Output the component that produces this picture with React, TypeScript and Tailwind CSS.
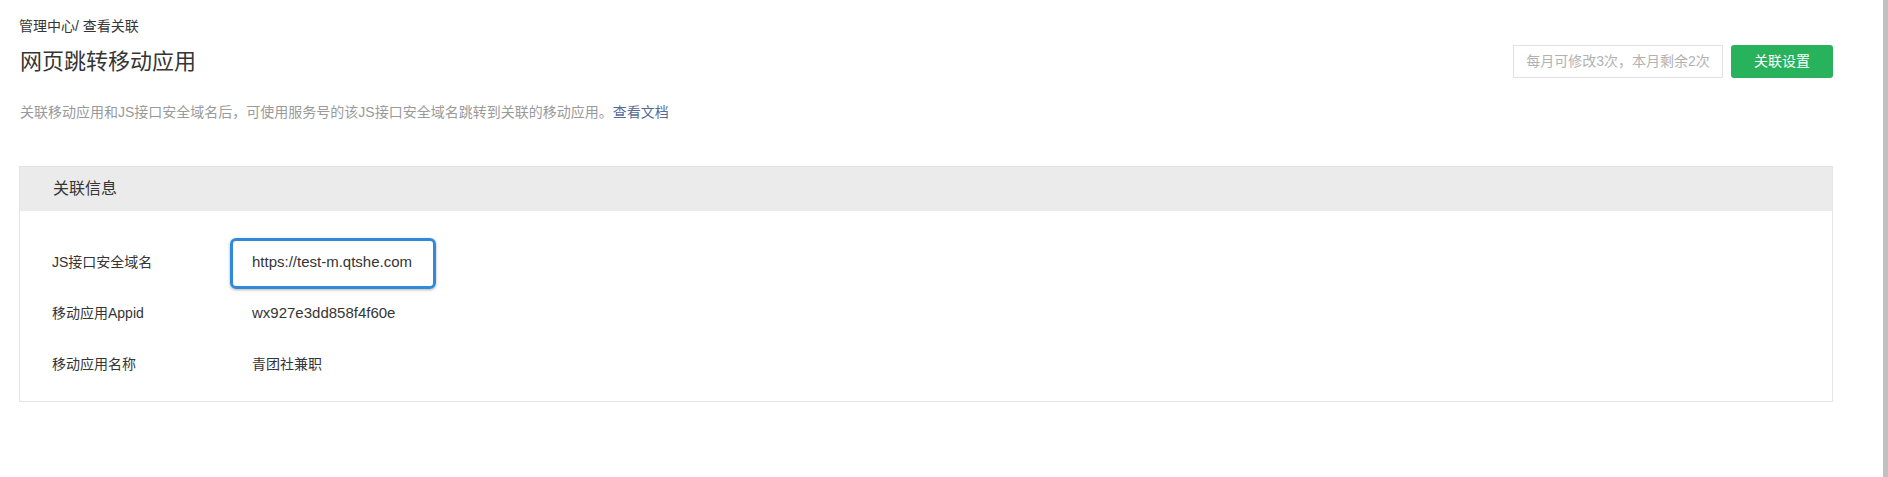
import React from "react";

// 一行关联信息
interface InfoRowProps {
    label: string;
    value: string;
    latin?: boolean;
    highlight?: boolean;
}

function InfoRow({ label, value, latin, highlight }: InfoRowProps) {
    return (
        <div className="flex items-center h-[51px] pl-[32px] text-[14px] text-[#353535]">
            <div className="w-[200px] shrink-0">{label}</div>
            <div className={"relative h-full flex items-center " + (latin ? "text-[15px]" : "text-[14px]")}>
                {value}
                {/* 截图里的蓝色标注框 */}
                {highlight && (
                    <div className="absolute left-[-22px] top-[1px] w-[206px] h-[51px] border-[3px] border-[#2f89dc] rounded-[6px] shadow-[0_1px_3px_rgba(0,0,0,0.3)]" />
                )}
            </div>
        </div>
    );
}

export default function App() {
    const rows: InfoRowProps[] = [
        { label: "JS接口安全域名", value: "https://test-m.qtshe.com", latin: true, highlight: true },
        { label: "移动应用Appid", value: "wx927e3dd858f4f60e", latin: true },
        { label: "移动应用名称", value: "青团社兼职" },
    ];

    return (
        <div
            className="flex h-[477px] w-[1888px] bg-white overflow-hidden"
            style={{ fontFamily: '"Liberation Sans", "Noto Sans CJK SC", sans-serif' }}
        >
            <div className="flex-1 pl-[19px] pr-[50px]">
                {/* Breadcrumb */}
                <div className="pt-[17px] text-[14px] leading-[18px] text-[#353535]">
                    管理中心/ 查看关联
                </div>

                {/* Title + actions */}
                <div className="mt-[10px] flex items-center justify-between h-[33px]">
                    <h1 className="text-[22px] text-[#353535] pl-[1px]">网页跳转移动应用</h1>
                    <div className="flex items-center gap-[8px]">
                        <div className="h-[33px] w-[210px] flex items-center justify-center border border-[#e2e2e2] text-[14px] text-[#b2b2b2]">
                            每月可修改3次，本月剩余2次
                        </div>
                        <button className="h-[33px] w-[102px] rounded-[3px] bg-[#28b25b] text-white text-[14px]">
                            关联设置
                        </button>
                    </div>
                </div>

                {/* Description */}
                <p className="mt-[24px] text-[14px] leading-[20px] text-[#9a9a9a] pl-[1px]">
                    关联移动应用和JS接口安全域名后，可使用服务号的该JS接口安全域名跳转到关联的移动应用。
                    <span className="text-[#576b95]">查看文档</span>
                </p>

                {/* Info panel */}
                <div className="mt-[44px] border border-[#e4e4e4]">
                    <div className="h-[44px] flex items-center pl-[33px] bg-[#ebebeb] text-[16px] text-[#353535]">
                        关联信息
                    </div>
                    <div className="pt-[26px] pb-[11px]">
                        {rows.map((r) => (
                            <InfoRow key={r.label} {...r} />
                        ))}
                    </div>
                </div>
            </div>

            {/* scrollbar */}
            <div className="w-[5px] h-full bg-[#c1c1c1]" />
        </div>
    );
}
